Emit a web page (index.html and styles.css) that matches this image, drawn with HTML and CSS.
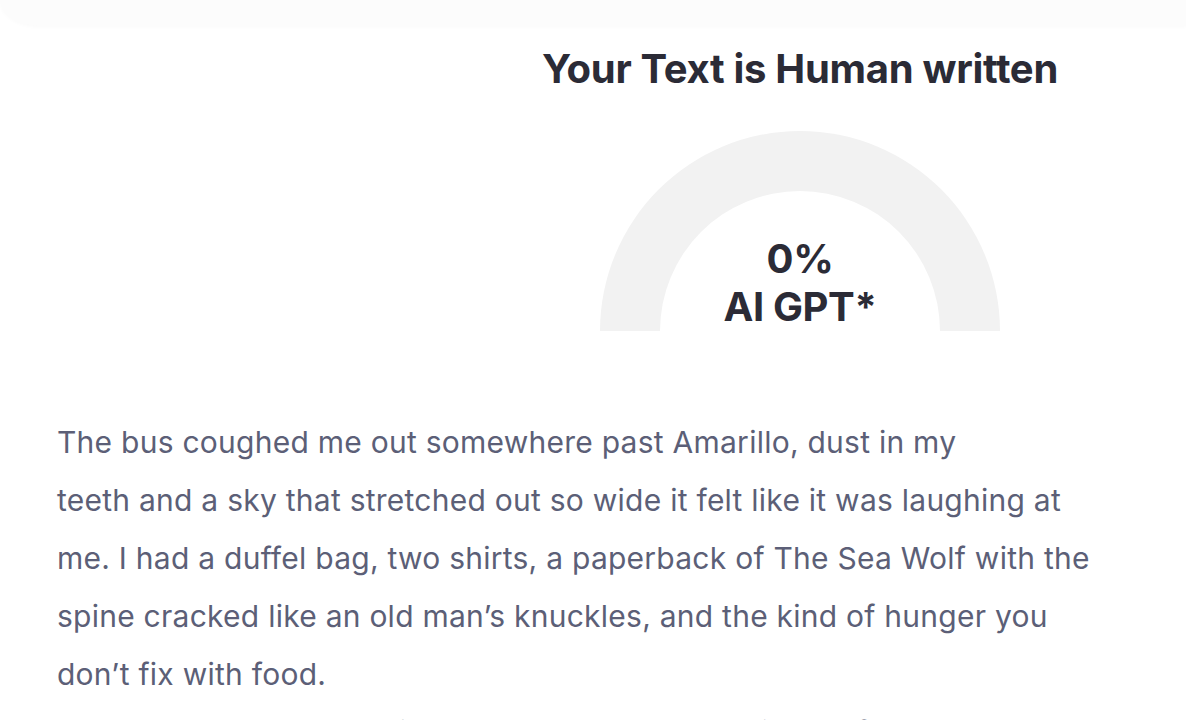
FILE: index.html
```html
<!DOCTYPE html>
<html lang="en">
<head>
<meta charset="utf-8">
<title>AI Detector Result</title>
<link rel="stylesheet" href="styles.css">
</head>
<body>
<div class="topbar"></div>
<main class="result">
  <section class="summary">
    <div class="summary-main">
      <h1 class="verdict">Your Text is Human written</h1>
      <div class="gauge">
        <div class="gauge-hole">
          <span class="gauge-value">0%</span>
          <span class="gauge-label">AI GPT*</span>
        </div>
      </div>
    </div>
  </section>
  <article class="analyzed-text">
    <p>The bus coughed me out somewhere past Amarillo, dust in my<br>teeth and a sky that stretched out so wide it felt like it was laughing at me. I had a duffel bag, two shirts, a paperback of The Sea Wolf with the spine cracked like an old man’s knuckles, and the kind of hunger you don’t fix with food.</p>
    <p>The world ahead was wide and empty, a gas station half asleep and a road that kept on going.</p>
  </article>
</main>
</body>
</html>
```
FILE: styles.css
```css
* { box-sizing: border-box; }
html, body { margin: 0; padding: 0; background: #ffffff; }
body {
  font-family: Inter, "Noto Sans", "Liberation Sans", sans-serif;
  width: 1186px;
  height: 720px;
  overflow: hidden;
}
.topbar {
  height: 26px;
  background: #fcfcfc;
  border-bottom-left-radius: 40px 26px;
  box-shadow: 0 1px 4px rgba(0, 0, 0, 0.025);
}
.summary {
  display: grid;
  grid-template-columns: 414px 1fr;
}
.summary-main {
  grid-column: 2;
  display: flex;
  flex-direction: column;
  align-items: center;
}
.verdict {
  margin: 20px 0 0;
  font-size: 40px;
  line-height: 46px;
  font-weight: 700;
  color: #2b2b36;
  letter-spacing: -0.3px;
}
.gauge {
  margin-top: 39px;
  width: 400px;
  height: 200px;
  border-radius: 200px 200px 0 0;
  background: #f2f2f2;
  display: flex;
  align-items: flex-end;
  justify-content: center;
}
.gauge-hole {
  width: 280px;
  height: 140px;
  border-radius: 140px 140px 0 0;
  background: #ffffff;
  display: flex;
  flex-direction: column;
  align-items: center;
  justify-content: flex-end;
  color: #2b2b36;
  font-weight: 700;
  font-size: 40px;
  line-height: 48px;
  letter-spacing: -0.4px;
}
.analyzed-text {
  padding: 82px 0 0 57px;
}
.analyzed-text p {
  margin: 0;
  width: 1050px;
  font-size: 30px;
  line-height: 58px;
  letter-spacing: 0.25px;
  color: #5c5f77;
}
```
